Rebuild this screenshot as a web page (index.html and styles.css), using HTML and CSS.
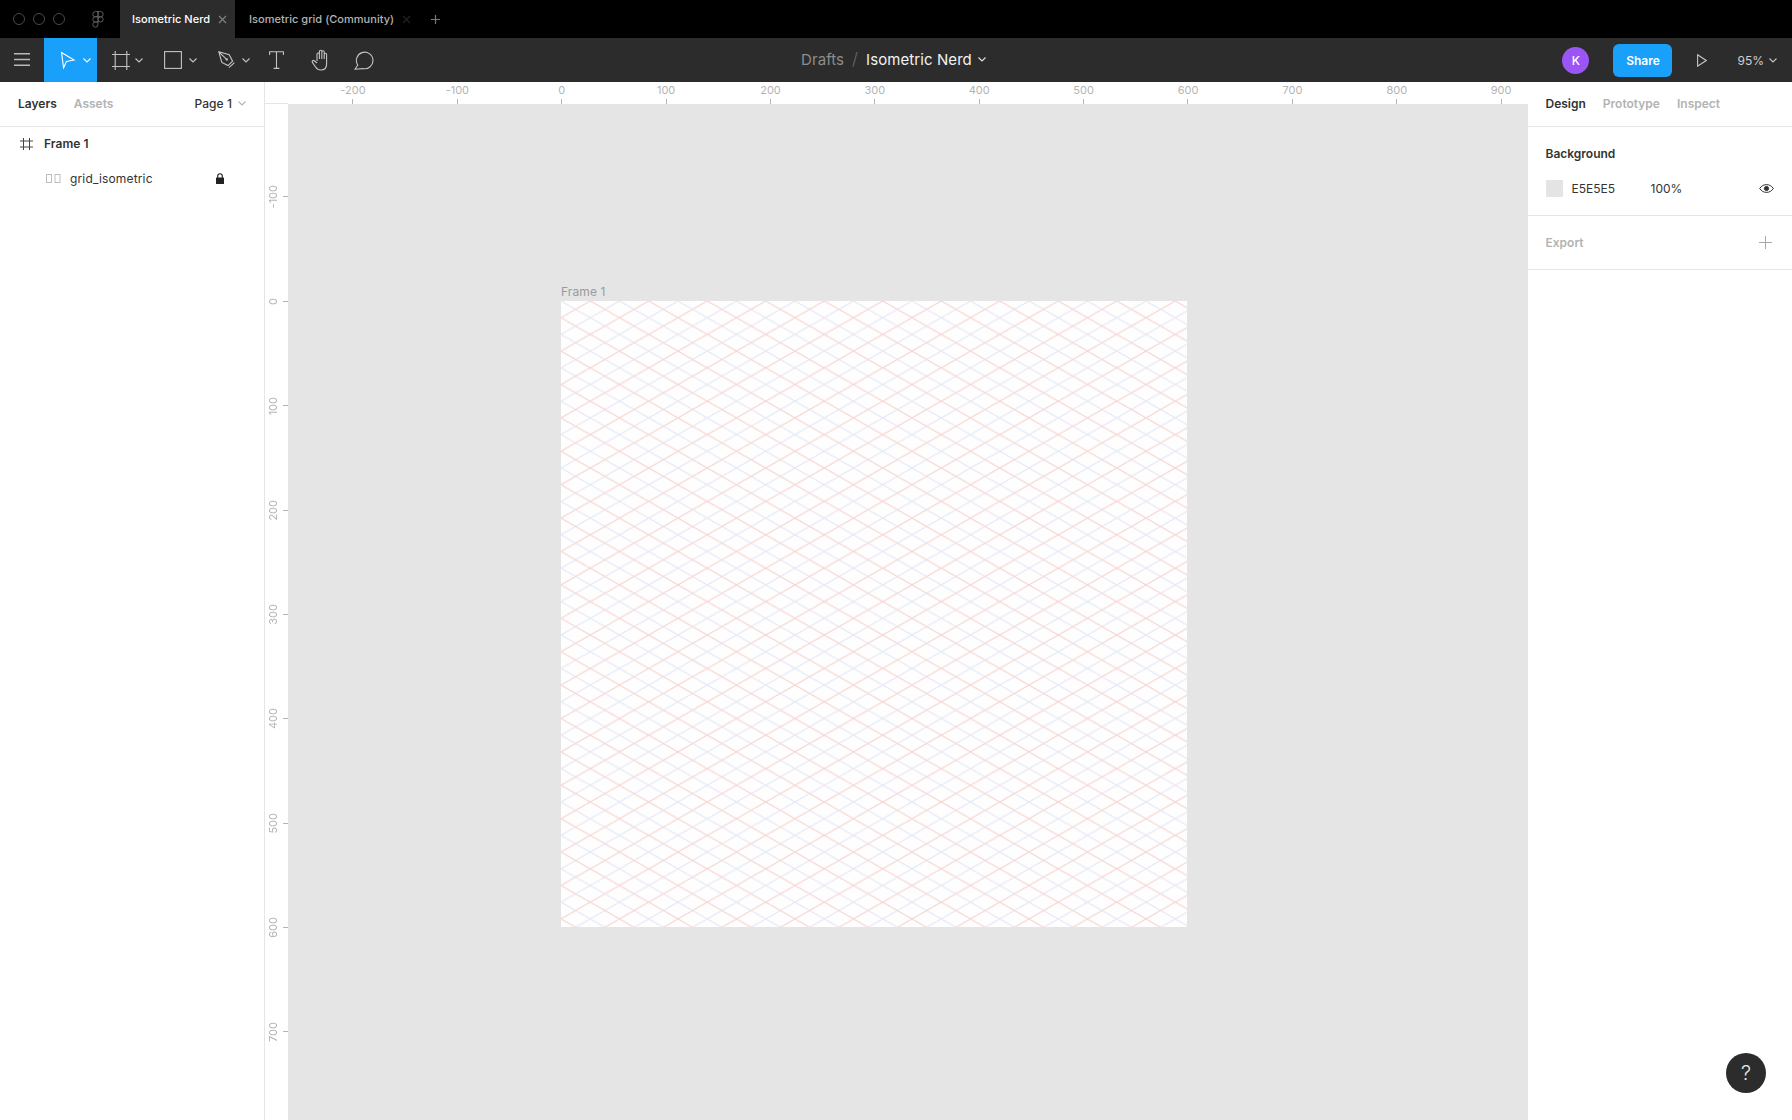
FILE: index.html
```html
<!DOCTYPE html>
<html lang="en">
<head>
<meta charset="utf-8">
<title>Isometric Nerd</title>
<link rel="stylesheet" href="styles.css">
</head>
<body>
<div class="app">
  <header class="titlebar">
    <div class="traffic"><span class="dot"></span><span class="dot"></span><span class="dot"></span></div>
    <svg class="logo" viewBox="0 0 12 17" width="12" height="17"><path d="M6 .6H3.4a2.6 2.6 0 0 0 0 5.2H6zM6 .6h2.6a2.6 2.6 0 0 1 0 5.2H6zM6 5.8H3.4a2.6 2.6 0 0 0 0 5.2H6zM11.2 8.4a2.6 2.6 0 1 1-5.2 0 2.6 2.6 0 0 1 5.2 0zM6 11H3.4a2.6 2.6 0 1 0 2.6 2.6z"/></svg>
    <div class="tab tab-active"><span>Isometric Nerd</span><svg class="x" viewBox="0 0 9 9" width="9" height="9"><path d="M1 1l7 7M8 1L1 8"/></svg></div>
    <div class="tab tab-idle"><span>Isometric grid (Community)</span><svg class="x x-dark" viewBox="0 0 9 9" width="9" height="9"><path d="M1 1l7 7M8 1L1 8"/></svg></div>
    <svg class="tab-plus" viewBox="0 0 9 9" width="9" height="9"><path d="M4.5 0v9M0 4.5h9"/></svg>
  </header>

  <nav class="toolbar">
    <button class="menu-btn"><svg viewBox="0 0 16 13" width="16" height="13"><path d="M0 .75h16M0 6.5h16M0 12.25h16"/></svg></button>
    <div class="tool tool-move">
      <svg class="ico-white" viewBox="0 0 16 18" width="16" height="18"><path d="M1.5 1.5L14 9l-7.6 1.5L3.6 16.8z"/></svg>
      <svg class="chev chev-white" viewBox="0 0 8 5" width="8" height="5"><path d="M.5.5L4 4 7.5.5"/></svg>
    </div>
    <div class="tool tool-frame">
      <svg class="ico" viewBox="0 0 18 19" width="18" height="19"><path d="M3.2 0v19M14.8 0v19M0 3.5h18M0 15.5h18"/></svg>
      <svg class="chev" viewBox="0 0 8 5" width="8" height="5"><path d="M.5.5L4 4 7.5.5"/></svg>
    </div>
    <div class="tool tool-rect">
      <svg class="ico" viewBox="0 0 18 18" width="18" height="18"><rect x=".6" y=".6" width="16.8" height="16.8"/></svg>
      <svg class="chev" viewBox="0 0 8 5" width="8" height="5"><path d="M.5.5L4 4 7.5.5"/></svg>
    </div>
    <div class="tool tool-pen">
      <svg class="ico" viewBox="0 0 18 18" width="18" height="18"><path d="M.8.8l10.4 3 3.4 6.4-4.6 4.4-6.2-3.2zM.8.8l7.4 7M11 16.6l5.4-5"/><circle class="fill" cx="8.8" cy="8.4" r="1.2"/></svg>
      <svg class="chev" viewBox="0 0 8 5" width="8" height="5"><path d="M.5.5L4 4 7.5.5"/></svg>
    </div>
    <div class="tool tool-text">
      <svg class="ico" viewBox="0 0 15 18" width="15" height="18"><path d="M.6 4V.8h13.8V4M7.5.8v16.6M4.6 17.4h5.8"/></svg>
    </div>
    <div class="tool tool-hand">
      <svg class="ico" viewBox="0 0 20 22" width="20" height="22"><path d="M6 12V5.2a1.2 1.2 0 0 1 2.4 0V10M8.4 10V2.4a1.2 1.2 0 0 1 2.4 0V10M10.800 10V3a1.200 1.200 0 0 1 2.400 0V10M13.200 10V5.400a1.200 1.200 0 0 1 2.400 0V15c0 3.800-2.400 6-5.600 6-2.800 0-4.200-1-5.400-3L1.400 13.400c-.8-1.200.8-2.600 1.900-1.600L6 14"/></svg>
    </div>
    <div class="tool tool-comment">
      <svg class="ico" viewBox="0 0 20 19" width="20" height="19"><path d="M1 18.200l2.800-4.100A8.300 8.300 0 1 1 9 17.600z"/></svg>
    </div>
    <div class="crumbs">
      <span class="crumb-dim">Drafts</span><span class="crumb-sep">/</span><span class="crumb-file">Isometric Nerd</span>
      <svg class="chev chev-light" viewBox="0 0 8 5" width="8" height="5"><path d="M.5.5L4 4 7.5.5"/></svg>
    </div>
    <div class="actions">
      <span class="avatar">K</span>
      <span class="share">Share</span>
      <svg class="play" viewBox="0 0 10 13" width="10" height="13"><path d="M.6.8l8.600 5.700-8.600 5.700z"/></svg>
      <span class="zoom-val">95%</span>
      <svg class="chev" viewBox="0 0 8 5" width="8" height="5"><path d="M.5.5L4 4 7.5.5"/></svg>
    </div>
  </nav>

  <div class="workspace">
    <aside class="panel-left">
      <div class="panel-tabs">
        <span class="tab-on">Layers</span><span class="tab-off">Assets</span>
        <span class="page">Page 1<svg class="chev chev-grey" viewBox="0 0 8 5" width="8" height="5"><path d="M.5.5L4 4 7.5.5"/></svg></span>
      </div>
      <div class="layers">
        <div class="layer layer-frame">
          <svg class="layer-ico" viewBox="0 0 13 12" width="13" height="12"><path d="M3.500 0v12M9.500 0v12M0 3h13M0 9h13"/></svg>
          <span>Frame 1</span>
        </div>
        <div class="layer layer-child">
          <svg class="grid-ico" viewBox="0 0 15 9" width="15" height="9"><rect x=".5" y=".5" width="5" height="8"/><rect x="9" y=".5" width="5" height="8"/></svg>
          <span class="layer-name">grid_isometric</span>
          <svg class="lock" viewBox="0 0 8 11" width="8" height="11"><path d="M1.700 5V3a2.300 2.300 0 0 1 4.600 0v2" fill="none" stroke="#222" stroke-width="1.100"/><rect y="4.500" width="8" height="6.500" rx=".6" fill="#222"/></svg>
        </div>
      </div>
    </aside>

    <main class="stage">
      <div class="ruler-top">
        <div class="ruler-corner"></div>
        <div class="ruler-h">
          <div class="mark"><span>-200</span><i></i></div>
          <div class="mark"><span>-100</span><i></i></div>
          <div class="mark"><span>0</span><i></i></div>
          <div class="mark"><span>100</span><i></i></div>
          <div class="mark"><span>200</span><i></i></div>
          <div class="mark"><span>300</span><i></i></div>
          <div class="mark"><span>400</span><i></i></div>
          <div class="mark"><span>500</span><i></i></div>
          <div class="mark"><span>600</span><i></i></div>
          <div class="mark"><span>700</span><i></i></div>
          <div class="mark"><span>800</span><i></i></div>
          <div class="mark"><span>900</span><i></i></div>
        </div>
      </div>
      <div class="stage-body">
        <div class="ruler-v">
          <div class="vmark"><span>-100</span><i></i></div>
          <div class="vmark"><span>0</span><i></i></div>
          <div class="vmark"><span>100</span><i></i></div>
          <div class="vmark"><span>200</span><i></i></div>
          <div class="vmark"><span>300</span><i></i></div>
          <div class="vmark"><span>400</span><i></i></div>
          <div class="vmark"><span>500</span><i></i></div>
          <div class="vmark"><span>600</span><i></i></div>
          <div class="vmark"><span>700</span><i></i></div>
        </div>
        <div class="canvas">
          <div class="frame-label">Frame 1</div>
          <svg class="frame" width="626" height="626" viewBox="0 0 626 626">
            <defs>
              <pattern id="iso" patternUnits="userSpaceOnUse" width="58.5" height="33.4">
                <path class="line-blue" d="M0 0L58.5 33.4M58.5 0L0 33.4"/>
                <path class="line-red" d="M29.250 0L58.5 16.700M0 16.700L29.250 33.400M29.250 0L0 16.700M58.500 16.700L29.250 33.400"/>
              </pattern>
            </defs>
            <rect class="frame-fill" width="626" height="626"/>
            <rect width="626" height="626" fill="url(#iso)"/>
          </svg>
        </div>
      </div>
    </main>

    <aside class="panel-right">
      <div class="panel-tabs right-tabs">
        <span class="tab-on">Design</span><span class="tab-off">Prototype</span><span class="tab-off">Inspect</span>
      </div>
      <section class="bg-section">
        <h3 class="section-title">Background</h3>
        <div class="bg-row">
          <span class="swatch"></span>
          <span class="hex">E5E5E5</span>
          <span class="opacity">100%</span>
          <svg class="eye" viewBox="0 0 15 9" width="15" height="9"><path d="M.7 4.500C2.500 1.800 4.800.6 7.500.6s5 1.200 6.800 3.900c-1.800 2.700-4.100 3.900-6.800 3.900S2.500 7.200.7 4.500z"/><circle cx="7.500" cy="4.500" r="2.100"/></svg>
        </div>
      </section>
      <section class="export-section">
        <h3 class="section-title title-dim">Export</h3>
        <svg class="plus" viewBox="0 0 13 13" width="13" height="13"><path d="M6.500 0v13M0 6.500h13"/></svg>
      </section>
    </aside>
  </div>

  <div class="help">?</div>
</div>
</body>
</html>
```
FILE: styles.css
```css
* { box-sizing: border-box; }
html, body { margin: 0; padding: 0; height: 100%; }
body { font-family: Inter, "Noto Sans", sans-serif; font-size: 12px; color: #333; background: #fff; overflow: hidden; }
svg { display: block; flex: none; }
.app { position: relative; display: flex; flex-direction: column; width: 1792px; height: 1120px; overflow: hidden; }

/* title bar */
.titlebar { display: flex; align-items: center; height: 38px; background: #000; flex: none; }
.traffic { display: flex; gap: 8px; padding-left: 13px; width: 92px; }
.dot { width: 12px; height: 12px; border: 1px solid #4a4a4a; border-radius: 50%; }
.logo { fill: none; stroke: #666; stroke-width: .9; margin-right: 16px; }
.tab { display: flex; align-items: center; height: 38px; font-weight: 500; font-size: 11px; letter-spacing: .03px; }
.tab-active { width: 115px; padding-left: 12px; background: #2c2c2c; color: #fff; }
.tab-idle { padding-left: 14px; color: #b3b3b3; }
.tab .x { margin-left: 8px; }
.x { fill: none; stroke: #808080; stroke-width: 1.2; }
.x-dark { stroke: #222; }
.tab-plus { margin-left: 20px; fill: none; stroke: #7a7a7a; stroke-width: 1.200; }

/* toolbar */
.toolbar { display: flex; align-items: center; height: 44px; background: #2c2c2c; flex: none; }
.menu-btn { display: flex; align-items: center; justify-content: center; width: 44px; height: 44px; padding: 0 0 2px; background: none; border: 0; }
.menu-btn svg { fill: none; stroke: #b8b8b8; stroke-width: 1.400; }
.tool { display: flex; align-items: center; height: 44px; }
.tool-move { width: 53px; padding-left: 16px; background: #18a0fb; }
.tool-move .chev { margin-left: 7px; }
.tool-frame { width: 53px; padding-left: 15px; }
.tool-frame .chev { margin-left: 5px; }
.tool-rect { width: 53px; padding-left: 14px; }
.tool-rect .chev { margin-left: 7px; }
.tool-pen { width: 53px; padding-left: 15px; }
.tool-pen .chev { margin-left: 6px; }
.tool-text { width: 44px; padding-left: 13px; }
.tool-hand { width: 44px; padding-left: 11px; }
.tool-comment { width: 44px; padding-left: 10px; }
.ico { fill: none; stroke: #c4c4c4; stroke-width: 1.100; }
.ico .fill { fill: #c4c4c4; stroke: none; }
.ico-white { fill: none; stroke: #fff; stroke-width: 1.100; }
.chev { fill: none; stroke: #c4c4c4; stroke-width: 1.100; }
.chev-white { stroke: #fff; }
.chev-light { stroke: #e6e6e6; margin-left: 6px; }
.chev-grey { stroke: #b3b3b3; display: inline-block; margin-left: 6px; }
.crumbs { display: flex; align-items: center; margin-left: 413px; padding-bottom: 2px; font-size: 15px; letter-spacing: .08px; }
.crumb-dim { color: #8c8c8c; }
.crumb-sep { color: #6a6a6a; margin: 0 8px; font-size: 17px; font-weight: 300; }
.crumb-file { color: #f2f2f2; }
.actions { display: flex; align-items: center; margin-left: auto; padding-right: 15px; }
.avatar { display: flex; align-items: center; justify-content: center; width: 27px; height: 27px; border-radius: 50%; background: #9b55f5; color: #fff; font-size: 12px; font-weight: 500; }
.share { display: flex; align-items: center; justify-content: center; width: 59px; height: 33px; margin-left: 24px; border-radius: 6px; background: #18a0fb; color: #fff; font-size: 12px; font-weight: 600; }
.play { margin-left: 25px; fill: none; stroke: #c4c4c4; stroke-width: 1.100; }
.zoom-val { margin-left: 30px; color: #d0d0d0; font-size: 12px; }
.actions .chev { margin-left: 5px; }

/* workspace */
.workspace { display: flex; flex: 1; min-height: 0; }
.panel-left { width: 265px; border-right: 1px solid #e5e5e5; background: #fff; flex: none; }
.panel-tabs { display: flex; align-items: center; height: 45px; padding: 0 0 2px 18px; border-bottom: 1px solid #e5e5e5; font-weight: 600; }
.tab-on { color: #333; }
.tab-off { color: #b3b3b3; margin-left: 17px; }
.page { display: flex; align-items: center; margin-left: auto; padding-right: 18px; font-weight: 500; color: #333; letter-spacing: .05px; }
.layers { margin-top: -1px; }
.layer { display: flex; align-items: center; height: 35px; }
.layer-frame { font-weight: 600; padding-left: 20px; letter-spacing: .05px; }
.layer-frame span { margin-left: 11px; }
.layer-ico { fill: none; stroke: #444; stroke-width: 1; }
.layer-child { padding-left: 46px; }
.grid-ico { fill: none; stroke: #bdbdbd; stroke-width: 1; }
.layer-name { margin-left: 9px; color: #333; width: 146px; letter-spacing: .15px; }
.lock { flex: none; }

.stage { display: flex; flex-direction: column; flex: 1; min-width: 0; }
.ruler-top { display: flex; height: 22px; flex: none; background: #fff; }
.ruler-corner { width: 23px; height: 22px; border-bottom: 1px solid #e5e5e5; flex: none; }
.ruler-h { display: flex; flex: 1; padding-left: 12.800px; overflow: hidden; min-width: 0; }
.mark { display: flex; flex-direction: column; align-items: center; justify-content: flex-end; flex: none; width: 104.380px; height: 22px; }
.mark span { font-size: 11px; line-height: 13px; color: #b3b3b3; margin-bottom: 2px; }
.mark i { width: 1px; height: 5px; background: #b3b3b3; }
.stage-body { display: flex; flex: 1; min-height: 0; }
.ruler-v { display: flex; flex-direction: column; width: 23px; padding-top: 40.800px; flex: none; background: #fff; overflow: hidden; }
.vmark { display: flex; align-items: center; justify-content: flex-end; flex: none; height: 104.380px; }
.vmark span { writing-mode: vertical-rl; transform: rotate(180deg); font-size: 11px; line-height: 13px; color: #b3b3b3; margin-right: 3px; }
.vmark i { width: 5px; height: 1px; background: #b3b3b3; }
.canvas { position: relative; flex: 1; background: #e5e5e5; }
.frame-label { position: absolute; left: 273px; top: 181px; color: #9a9a9a; font-size: 12px; line-height: 14px; letter-spacing: .12px; }
.frame { position: absolute; left: 273px; top: 197px; filter: blur(.35px); }
.frame-fill { fill: #fefefe; }
.line-blue { fill: none; stroke: #e8e8f7; stroke-width: 1.200; }
.line-red { fill: none; stroke: #f6d7d3; stroke-width: 1.300; }

.panel-right { width: 264px; background: #fff; flex: none; }
.right-tabs { padding-left: 17.500px; }
.bg-section { height: 89px; padding: 18px 18px 0 17.500px; border-bottom: 1px solid #e5e5e5; }
.section-title { margin: 0; font-size: 12px; line-height: 18px; font-weight: 600; color: #333; }
.title-dim { color: #b3b3b3; }
.bg-row { display: flex; align-items: center; margin-top: 17px; height: 17px; }
.swatch { width: 17px; height: 17px; background: #e4e4e4; flex: none; }
.hex { margin-left: 9px; width: 81px; color: #333; }
.opacity { color: #333; width: 111px; }
.eye { fill: none; stroke: #333; stroke-width: 1; }
.eye circle { fill: #333; }
.export-section { display: flex; align-items: center; justify-content: space-between; height: 54px; padding: 0 20px 0 17.500px; border-bottom: 1px solid #e5e5e5; }
.plus { fill: none; stroke: #a8a8a8; stroke-width: 1; }

.help { position: absolute; left: 1726px; top: 1053px; display: flex; align-items: center; justify-content: center; width: 40px; height: 40px; border-radius: 50%; background: #2c2c2c; color: #e6e6e6; font-size: 20px; font-weight: 300; }
```
